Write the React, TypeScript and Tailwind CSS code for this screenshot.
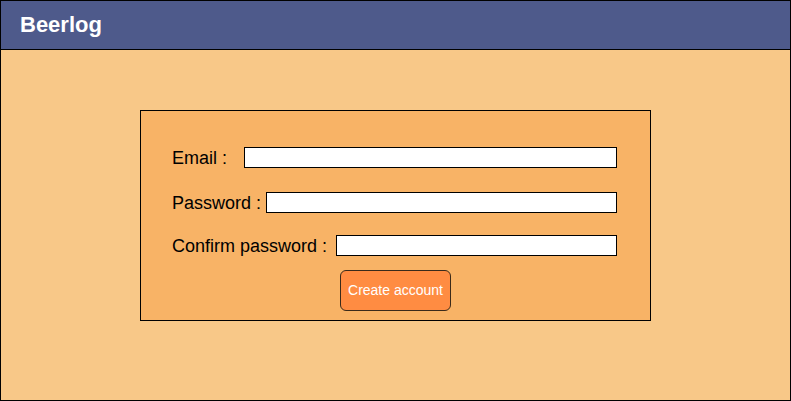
import React from "react";

export default function App() {
  return (
    <div
      className="w-[791px] h-[401px] border border-black bg-[#f8c888] flex flex-col"
      style={{ fontFamily: '"Liberation Sans", Arial, sans-serif' }}
    >
      <header className="h-[49px] shrink-0 bg-[#4e5a8b] border-b border-black flex items-center pl-[19px]">
        <span className="text-white font-bold text-[22px] leading-none">Beerlog</span>
      </header>
      <div className="flex justify-center pt-[60px]">
        <div className="w-[511px] h-[211px] border border-black bg-[#f8b366] pl-[31px] pr-[33px] pt-[36px] flex flex-col">
          <div className="flex items-center h-[21px]">
            <label className="w-[72px] text-[18px] leading-none text-black">Email :</label>
            <input className="flex-1 h-[21px] bg-white border border-black outline-none" type="text" />
          </div>
          <div className="flex items-center h-[21px] mt-[24px]">
            <label className="w-[94px] text-[18px] leading-none text-black">Password :</label>
            <input className="flex-1 h-[21px] bg-white border border-black outline-none" type="password" />
          </div>
          <div className="flex items-center h-[21px] mt-[22px]">
            <label className="w-[164px] text-[18px] leading-none text-black">Confirm password :</label>
            <input className="flex-1 h-[21px] bg-white border border-black outline-none" type="password" />
          </div>
          <div className="flex justify-center mt-[14px] -ml-[31px] -mr-[33px]">
            <button className="w-[111px] h-[41px] rounded-[6px] border border-[#3a2a1a] bg-[#ff8c42] text-white text-[14px]">
              Create account
            </button>
          </div>
        </div>
      </div>
    </div>
  );
}
